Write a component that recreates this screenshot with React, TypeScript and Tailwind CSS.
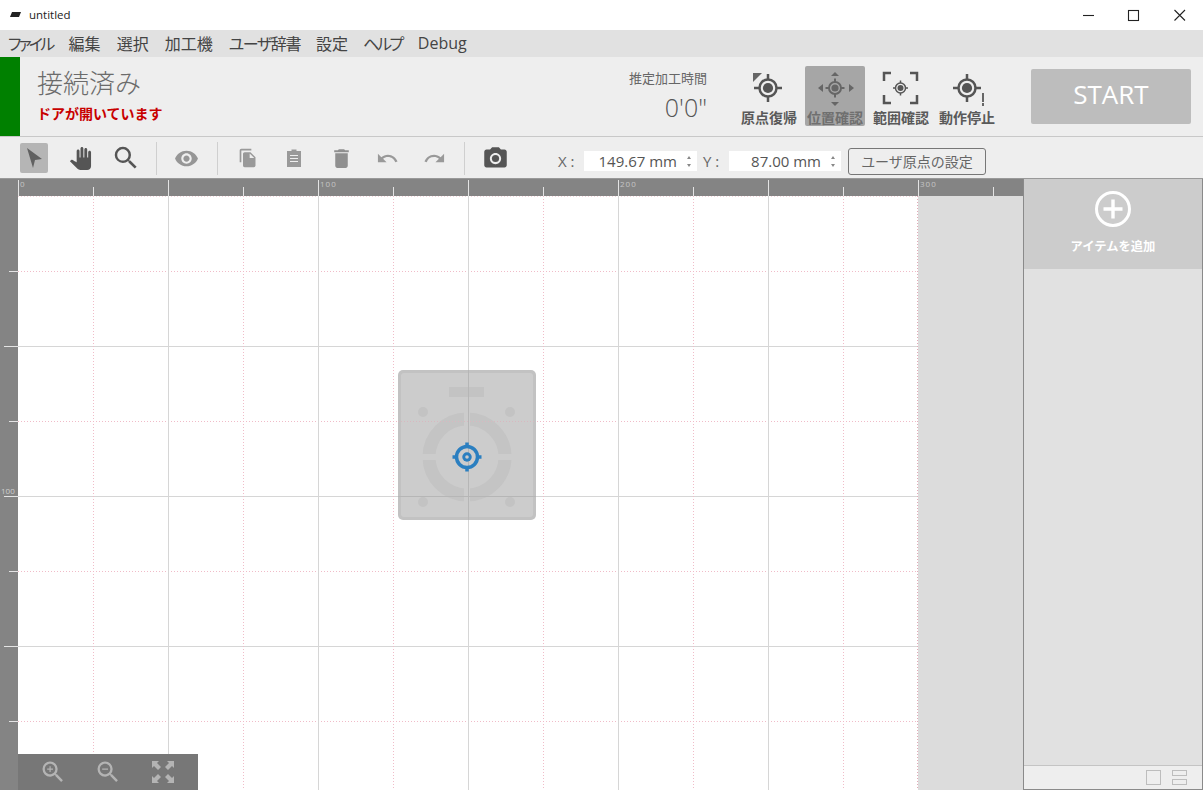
import { MdDelete, MdFileCopy, MdPanTool, MdPhotoCamera, MdRedo, MdSearch, MdUndo, MdVisibility, MdZoomIn, MdZoomOut } from "react-icons/md";

const jp = "font-['Noto_Sans_CJK_JP','Noto_Sans',sans-serif]";
const latin = "font-['Open_Sans',sans-serif]";

const menus = [
  { label: "ファイル", className: "tracking-[-2.7px]" },
  { label: "編集", className: "" },
  { label: "選択", className: "" },
  { label: "加工機", className: "" },
  { label: "ユーザ辞書", className: "tracking-[-1.4px]" },
  { label: "設定", className: "-mr-px" },
  { label: "ヘルプ", className: "tracking-[-2.4px]" },
  { label: "Debug", className: "font-['Open_Sans',sans-serif]" },
];

// target ring shared by the header icons
function Target({
  cx,
  cy,
  r = 8.5,
  tick = 5.5,
  color = "#555",
  sw = 2.5,
  dot = 0.6,
  hole,
}: {
  cx: number;
  cy: number;
  r?: number;
  tick?: number;
  color?: string;
  sw?: number;
  dot?: number;
  hole?: string;
}) {
  return (
    <g>
      <circle cx={cx} cy={cy} r={r} fill="none" stroke={color} strokeWidth={sw} />
      <circle cx={cx} cy={cy} r={r * dot} fill={color} />
      {hole && <circle cx={cx} cy={cy} r={r * 0.17} fill={hole} />}
      <path
        d={`M${cx} ${cy - r - tick}V${cy - r}M${cx} ${cy + r}V${cy + r + tick}M${cx - r - tick} ${cy}H${cx - r}M${cx + r} ${cy}H${cx + r + tick}`}
        stroke={color}
        strokeWidth={sw}
      />
    </g>
  );
}

function HeaderButton({ label, active, children }: { label: string; active?: boolean; children: React.ReactNode }) {
  return (
    <div
      className={`flex h-[60px] w-[60px] flex-col items-center rounded-[2px] ${active ? "bg-[#a6a6a6] text-[#6f6f6f]" : "text-[#5a5a5a]"}`}
    >
      <svg width="60" height="39" viewBox="0 0 60 39" className="mt-[3px] shrink-0">
        {children}
      </svg>
      <span className={`${jp} -mx-2 whitespace-nowrap text-[14px] font-bold leading-[18px]`}>{label}</span>
    </div>
  );
}

function Spinner() {
  return (
    <span className="ml-[10px] flex flex-col gap-[5px]">
      <span className="h-0 w-0 border-x-[2.5px] border-b-[3px] border-x-transparent border-b-[#888]" />
      <span className="h-0 w-0 border-x-[2.5px] border-t-[3px] border-x-transparent border-t-[#888]" />
    </span>
  );
}

function Ruler() {
  const marks = Array.from({ length: 14 }, (_, i) => 18 + i * 75);
  return (
    <svg width="1005" height="17" className="block">
      {marks.map((x, i) => (
        <line key={x} x1={x + 0.5} x2={x + 0.5} y1={i % 2 === 0 ? 1 : 8} y2={17} stroke="#e4e4e4" />
      ))}
      {[0, 100, 200, 300].map((v) => (
        <text key={v} x={20 + v * 3} y={8} fontSize="8" letterSpacing="1" fill="#c4c4c4" fontFamily="Open Sans, sans-serif">
          {v}
        </text>
      ))}
    </svg>
  );
}

function Sheet() {
  const vs = Array.from({ length: 12 }, (_, i) => 75 * (i + 1));
  const hs = Array.from({ length: 7 }, (_, i) => 75 * (i + 1));
  return (
    <svg width="900" height="594" className="block">
      <line x1="0" x2="900" y1="0.5" y2="0.5" stroke="#f3d6dc" strokeDasharray="1 2" />
      {hs.map((y, i) =>
        i % 2 === 0 ? (
          <line key={y} x1="0" x2="900" y1={y + 0.5} y2={y + 0.5} stroke="#f0bcc8" strokeDasharray="1 2" />
        ) : (
          <line key={y} x1="0" x2="900" y1={y + 0.5} y2={y + 0.5} stroke="#d6d6d6" />
        ),
      )}
      {vs.map((x, i) =>
        i % 2 === 0 ? (
          <line key={x} x1={x + 0.5} x2={x + 0.5} y1="0" y2="594" stroke="#f0bcc8" strokeDasharray="1 2" />
        ) : (
          <line key={x} x1={x + 0.5} x2={x + 0.5} y1="0" y2="594" stroke="#d6d6d6" />
        ),
      )}
      <line x1="899.5" x2="899.5" y1="0" y2="594" stroke="#e2a9b6" strokeDasharray="1 2" />
    </svg>
  );
}

function Machine() {
  return (
    <svg width="140" height="152" viewBox="0 0 140 152" className="absolute left-[397px] top-[190px]">
      <rect x="1" y="1" width="138" height="150" rx="5" fill="#c2c2c2" />
      <rect x="4" y="4" width="132" height="144" rx="3" fill="#cccccc" />
      <rect x="52" y="18" width="35" height="10" fill="#c3c3c3" />
      {[[26, 43], [113, 43], [26, 133], [113, 133]].map(([x, y]) => (
        <circle key={x + "-" + y} cx={x} cy={y} r="5" fill="#c3c3c3" />
      ))}
      <circle cx="70" cy="88" r="38" fill="none" stroke="#c4c4c4" strokeWidth="13" />
      <path d="M22 88H118M70 40V136" stroke="#cccccc" strokeWidth="6" />
      <line x1="71.5" x2="71.5" y1="1" y2="151" stroke="#b6b6b6" />
      <line x1="1" x2="139" y1="127.5" y2="127.5" stroke="#b6b6b6" />
      <line x1="1" x2="139" y1="52.5" y2="52.5" stroke="#d8b8bf" strokeDasharray="1 2" />
      <Target cx={70} cy={88} r={10.5} tick={4} color="#2b7fc0" sw={3.5} dot={0.45} hole="#cccccc" />
    </svg>
  );
}

export default function App() {
  return (
    <div className={`flex h-[790px] w-[1203px] flex-col overflow-hidden bg-[#eeeeee] text-[#555] ${jp}`}>
      {/* title bar */}
      <div className="flex h-[30px] shrink-0 items-center bg-white pl-[10px] text-black">
        <svg width="11" height="6" viewBox="0 0 11 6">
          <path d="M2 0H11L9 5H0Z" fill="#222" />
        </svg>
        <span className={`ml-2 ${latin} text-[11.5px] text-[#222]`}>untitled</span>
        <svg width="135" height="30" viewBox="0 0 135 30" fill="none" stroke="#222" strokeWidth="1.1" className="ml-auto mr-[2px]">
          <path d="M17 15.5H28" />
          <rect x="62.5" y="10.5" width="10" height="10" />
          <path d="M108.5 10L119 20.5M119 10L108.5 20.5" />
        </svg>
      </div>

      {/* menu */}
      <div className="flex h-[27px] shrink-0 items-center gap-[16px] bg-[#e1e1e1] pb-[2px] pl-[8px] text-[16px] text-[#444] [font-feature-settings:'palt']">
        {menus.map((m) => (
          <span key={m.label} className={m.className}>
            {m.label}
          </span>
        ))}
      </div>

      {/* status header */}
      <div className="flex h-[80px] shrink-0 border-b border-[#c8c8c8] bg-[#eeeeee]">
        <div className="w-5 bg-[#008000]" />
        <div className="ml-[17px] flex w-[300px] flex-col">
          <span className="mt-[7px] text-[26px] font-light leading-[36px] text-[#6b6b6b]">接続済み</span>
          <span className="mt-[4px] text-[14px] font-bold leading-[18px] text-[#c80000]">ドアが開いています</span>
        </div>
        <div className="ml-[292px] flex w-[78px] flex-col items-end pt-[12px]">
          <span className="whitespace-nowrap text-[13px] leading-[18px] text-[#666]">推定加工時間</span>
          <span className={`mt-[5px] ${latin} text-[25px] font-light leading-[30px] text-[#555]`}>0'0"</span>
        </div>
        <div className="ml-[32px] flex gap-[6px] pt-[9px]">
          <HeaderButton label="原点復帰">
            <Target cx={29} cy={19} />
            <path d="M14 4H23L14 13Z" fill="#666" />
          </HeaderButton>
          <HeaderButton label="位置確認" active>
            <Target cx={30} cy={19} r={6} tick={3.5} color="#666" sw={2} />
            <path d="M30 3L34 7H26ZM30 37L26 33H34ZM13 19L18 15V23ZM49 19L44 15V23Z" fill="#666" />
          </HeaderButton>
          <HeaderButton label="範囲確認">
            <path d="M20 4H13V12M39 4H46V12M20 34H13V26M39 34H46V26" fill="none" stroke="#555" strokeWidth="2.5" />
            <Target cx={29.5} cy={19} r={5} tick={2.5} sw={1.5} />
          </HeaderButton>
          <HeaderButton label="動作停止">
            <Target cx={30} cy={19} />
            <path d="M46 24V33M46 34V37" stroke="#666" strokeWidth="2" />
          </HeaderButton>
        </div>
        <div className={`ml-[34px] mt-[12px] flex h-[55px] w-[160px] items-center justify-center rounded-[2px] bg-[#bdbdbd] pb-[4px] ${latin} text-[26px] text-white`}>
          START
        </div>
      </div>

      {/* toolbar */}
      <div className="flex h-[41px] shrink-0 items-center bg-[#eeeeee] pt-[1px] text-[#777]">
        <div className="ml-[20px] flex h-[30px] w-[28px] items-center justify-center rounded-[2px] bg-[#b5b5b5]">
          <svg width="18" height="22" viewBox="0 0 18 22">
            <path d="M2 1L17 12L10 13L8 21Z" fill="#616161" />
          </svg>
        </div>
        <MdPanTool size={23} className="ml-[21px] text-[#555]" />
        <MdSearch size={30} className="ml-[19px] text-[#555]" />
        <div className="ml-[15px] mr-[19px] h-[33px] w-px bg-[#cfcfcf]" />
        <MdVisibility size={25} className="-ml-[2px] text-[#969696]" />
        <div className="ml-[18px] mr-[19px] h-[33px] w-px bg-[#cfcfcf]" />
        <MdFileCopy size={20} className="ml-[1px] text-[#999]" />
        <svg width="14" height="18" viewBox="0 0 14 18" className="ml-[29px]">
          <path d="M0 2H4.5V0.5H9.5V2H14V18H0Z" fill="#999" />
          <path d="M3 6.5H11M3 9.5H11M3 12.5H11" stroke="#eeeeee" strokeWidth="1.2" />
        </svg>
        <MdDelete size={25} className="ml-[28px] text-[#8f8f8f]" />
        <MdUndo size={23} className="ml-[22px] text-[#999]" />
        <MdRedo size={23} className="ml-[24px] text-[#999]" />
        <div className="ml-[18px] mr-[19px] h-[33px] w-px bg-[#cfcfcf]" />
        <MdPhotoCamera size={27} className="-ml-[2px] text-[#555]" />
        <div className={`ml-[49px] mt-[6px] flex items-center ${latin} text-[15px] text-[#666]`}>
          <span className="w-[26px]">X :</span>
          <div className="flex h-[20px] w-[113px] items-center justify-end bg-white pr-[6px] text-[#555]">
            149.67 mm
            <Spinner />
          </div>
          <span className="ml-[6px] w-[26px]">Y :</span>
          <div className="flex h-[20px] w-[112px] items-center justify-end bg-white pr-[6px] text-[#555]">
            87.00 mm
            <Spinner />
          </div>
          <div className={`ml-[7px] flex h-[27px] w-[138px] items-center justify-center rounded-[3px] border border-[#777] ${jp} text-[14px] text-[#666]`}>
            ユーザ原点の設定
          </div>
        </div>
      </div>

      {/* workspace */}
      <div className="flex min-h-0 flex-1 border-t border-[#999]">
        <div className="relative w-[1023px] shrink-0 bg-[#dcdcdc]">
          <div className="h-[17px] bg-[#848484]">
            <Ruler />
          </div>
          <div className="flex">
            <div className="w-[18px] self-stretch bg-[#848484]">
              <svg width="18" height="594" className="block">
                {Array.from({ length: 8 }, (_, i) => 75 * (i + 1)).map((y, i) => (
                  <line key={y} x1={i % 2 === 0 ? 9 : 4} x2="18" y1={y + 0.5} y2={y + 0.5} stroke="#e4e4e4" />
                ))}
                <text x="1" y="298" fontSize="8" fill="#cfcfcf" fontFamily="Open Sans, sans-serif">
                  100
                </text>
              </svg>
            </div>
            <div className="h-[594px] w-[900px] bg-white">
              <Sheet />
            </div>
          </div>
          <Machine />
          {/* zoom controls */}
          <div className="absolute bottom-0 left-[18px] flex h-[36px] w-[180px] items-center bg-[#777777] pl-[21px] text-[#b4b4b4]">
            <MdZoomIn size={28} />
            <MdZoomOut size={28} className="ml-[27px]" />
            <svg width="24" height="24" viewBox="0 0 24 24" fill="currentColor" className="ml-[29px]">
              <path d="M1 1H8L6 3L10 7L7 10L3 6L1 8ZM23 1V8L21 6L17 10L14 7L18 3L16 1ZM1 23V16L3 18L7 14L10 17L6 21L8 23ZM23 23H16L18 21L14 17L17 14L21 18L23 16Z" />
            </svg>
          </div>
        </div>

        {/* side panel */}
        <div className="flex min-w-0 flex-1 flex-col border-x border-b border-[#8a8a8a] bg-[#e1e1e1]">
          <div className="flex h-[90px] shrink-0 flex-col items-center bg-[#cccccc] text-white">
            <svg width="38" height="38" viewBox="0 0 38 38" fill="none" stroke="white" strokeWidth="3" className="mt-[11px]">
              <circle cx="19" cy="19" r="16.5" />
              <path d="M19 9.5V28.5M9.5 19H28.5" strokeWidth="3.4" />
            </svg>
            <span className="mt-[9px] text-[12.3px] font-bold leading-[18px]">アイテムを追加</span>
          </div>
          <div className="flex-1" />
          <div className="flex h-[24px] shrink-0 items-center justify-end gap-[11px] border-t border-[#c4c4c4] bg-[#eeeeee] pr-[15px]">
            <div className="h-[15px] w-[15px] border border-[#bdbdbd]" />
            <div className="flex h-[15px] w-[15px] flex-col justify-between">
              <div className="h-[6px] border border-[#bdbdbd]" />
              <div className="h-[6px] border border-[#bdbdbd]" />
            </div>
          </div>
        </div>
      </div>
    </div>
  );
}
